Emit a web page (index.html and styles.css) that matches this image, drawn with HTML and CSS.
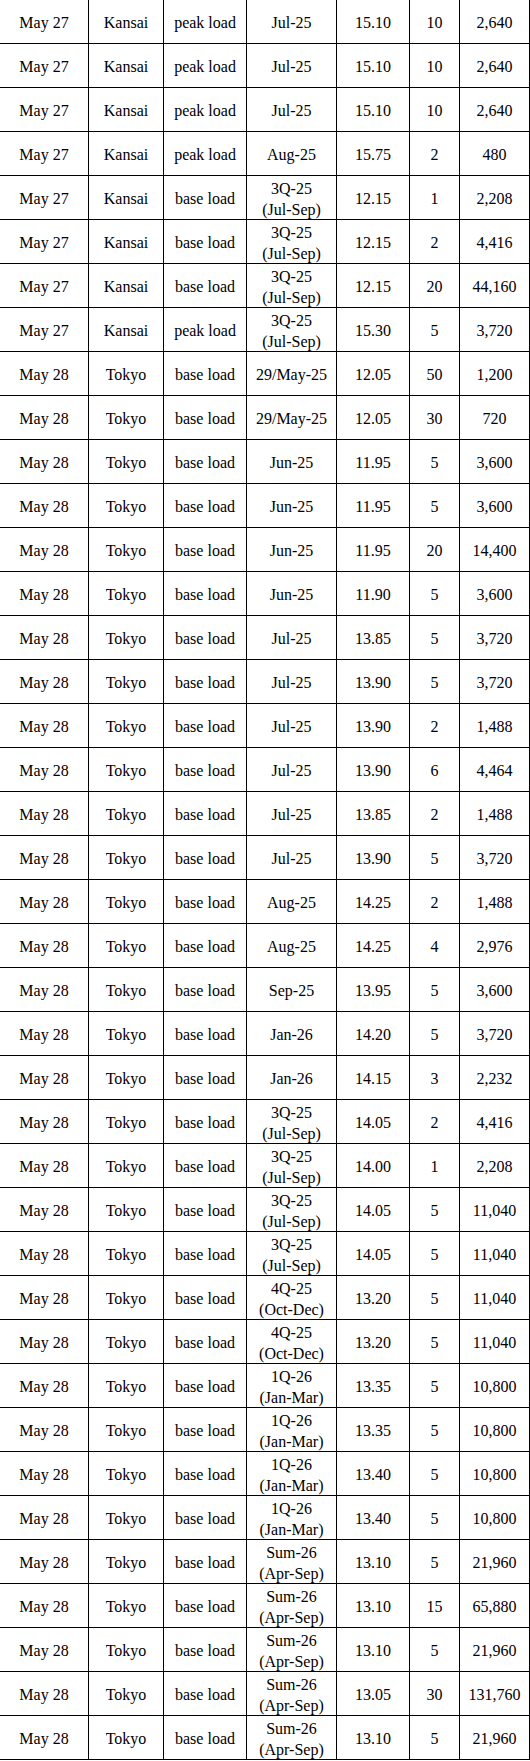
FILE: index.html
```html
<!DOCTYPE html>
<html lang="en">
<head>
<meta charset="utf-8">
<title>Trades</title>
<link rel="stylesheet" href="styles.css">
</head>
<body>
<div class="table">
<div class="row"><div class="c">May 27</div><div class="c">Kansai</div><div class="c">peak load</div><div class="c">Jul-25</div><div class="c">15.10</div><div class="c">10</div><div class="c">2,640</div></div>
<div class="row"><div class="c">May 27</div><div class="c">Kansai</div><div class="c">peak load</div><div class="c">Jul-25</div><div class="c">15.10</div><div class="c">10</div><div class="c">2,640</div></div>
<div class="row"><div class="c">May 27</div><div class="c">Kansai</div><div class="c">peak load</div><div class="c">Jul-25</div><div class="c">15.10</div><div class="c">10</div><div class="c">2,640</div></div>
<div class="row"><div class="c">May 27</div><div class="c">Kansai</div><div class="c">peak load</div><div class="c">Aug-25</div><div class="c">15.75</div><div class="c">2</div><div class="c">480</div></div>
<div class="row"><div class="c">May 27</div><div class="c">Kansai</div><div class="c">base load</div><div class="c">3Q-25<br>(Jul-Sep)</div><div class="c">12.15</div><div class="c">1</div><div class="c">2,208</div></div>
<div class="row"><div class="c">May 27</div><div class="c">Kansai</div><div class="c">base load</div><div class="c">3Q-25<br>(Jul-Sep)</div><div class="c">12.15</div><div class="c">2</div><div class="c">4,416</div></div>
<div class="row"><div class="c">May 27</div><div class="c">Kansai</div><div class="c">base load</div><div class="c">3Q-25<br>(Jul-Sep)</div><div class="c">12.15</div><div class="c">20</div><div class="c">44,160</div></div>
<div class="row"><div class="c">May 27</div><div class="c">Kansai</div><div class="c">peak load</div><div class="c">3Q-25<br>(Jul-Sep)</div><div class="c">15.30</div><div class="c">5</div><div class="c">3,720</div></div>
<div class="row"><div class="c">May 28</div><div class="c">Tokyo</div><div class="c">base load</div><div class="c">29/May-25</div><div class="c">12.05</div><div class="c">50</div><div class="c">1,200</div></div>
<div class="row"><div class="c">May 28</div><div class="c">Tokyo</div><div class="c">base load</div><div class="c">29/May-25</div><div class="c">12.05</div><div class="c">30</div><div class="c">720</div></div>
<div class="row"><div class="c">May 28</div><div class="c">Tokyo</div><div class="c">base load</div><div class="c">Jun-25</div><div class="c">11.95</div><div class="c">5</div><div class="c">3,600</div></div>
<div class="row"><div class="c">May 28</div><div class="c">Tokyo</div><div class="c">base load</div><div class="c">Jun-25</div><div class="c">11.95</div><div class="c">5</div><div class="c">3,600</div></div>
<div class="row"><div class="c">May 28</div><div class="c">Tokyo</div><div class="c">base load</div><div class="c">Jun-25</div><div class="c">11.95</div><div class="c">20</div><div class="c">14,400</div></div>
<div class="row"><div class="c">May 28</div><div class="c">Tokyo</div><div class="c">base load</div><div class="c">Jun-25</div><div class="c">11.90</div><div class="c">5</div><div class="c">3,600</div></div>
<div class="row"><div class="c">May 28</div><div class="c">Tokyo</div><div class="c">base load</div><div class="c">Jul-25</div><div class="c">13.85</div><div class="c">5</div><div class="c">3,720</div></div>
<div class="row"><div class="c">May 28</div><div class="c">Tokyo</div><div class="c">base load</div><div class="c">Jul-25</div><div class="c">13.90</div><div class="c">5</div><div class="c">3,720</div></div>
<div class="row"><div class="c">May 28</div><div class="c">Tokyo</div><div class="c">base load</div><div class="c">Jul-25</div><div class="c">13.90</div><div class="c">2</div><div class="c">1,488</div></div>
<div class="row"><div class="c">May 28</div><div class="c">Tokyo</div><div class="c">base load</div><div class="c">Jul-25</div><div class="c">13.90</div><div class="c">6</div><div class="c">4,464</div></div>
<div class="row"><div class="c">May 28</div><div class="c">Tokyo</div><div class="c">base load</div><div class="c">Jul-25</div><div class="c">13.85</div><div class="c">2</div><div class="c">1,488</div></div>
<div class="row"><div class="c">May 28</div><div class="c">Tokyo</div><div class="c">base load</div><div class="c">Jul-25</div><div class="c">13.90</div><div class="c">5</div><div class="c">3,720</div></div>
<div class="row"><div class="c">May 28</div><div class="c">Tokyo</div><div class="c">base load</div><div class="c">Aug-25</div><div class="c">14.25</div><div class="c">2</div><div class="c">1,488</div></div>
<div class="row"><div class="c">May 28</div><div class="c">Tokyo</div><div class="c">base load</div><div class="c">Aug-25</div><div class="c">14.25</div><div class="c">4</div><div class="c">2,976</div></div>
<div class="row"><div class="c">May 28</div><div class="c">Tokyo</div><div class="c">base load</div><div class="c">Sep-25</div><div class="c">13.95</div><div class="c">5</div><div class="c">3,600</div></div>
<div class="row"><div class="c">May 28</div><div class="c">Tokyo</div><div class="c">base load</div><div class="c">Jan-26</div><div class="c">14.20</div><div class="c">5</div><div class="c">3,720</div></div>
<div class="row"><div class="c">May 28</div><div class="c">Tokyo</div><div class="c">base load</div><div class="c">Jan-26</div><div class="c">14.15</div><div class="c">3</div><div class="c">2,232</div></div>
<div class="row"><div class="c">May 28</div><div class="c">Tokyo</div><div class="c">base load</div><div class="c">3Q-25<br>(Jul-Sep)</div><div class="c">14.05</div><div class="c">2</div><div class="c">4,416</div></div>
<div class="row"><div class="c">May 28</div><div class="c">Tokyo</div><div class="c">base load</div><div class="c">3Q-25<br>(Jul-Sep)</div><div class="c">14.00</div><div class="c">1</div><div class="c">2,208</div></div>
<div class="row"><div class="c">May 28</div><div class="c">Tokyo</div><div class="c">base load</div><div class="c">3Q-25<br>(Jul-Sep)</div><div class="c">14.05</div><div class="c">5</div><div class="c">11,040</div></div>
<div class="row"><div class="c">May 28</div><div class="c">Tokyo</div><div class="c">base load</div><div class="c">3Q-25<br>(Jul-Sep)</div><div class="c">14.05</div><div class="c">5</div><div class="c">11,040</div></div>
<div class="row"><div class="c">May 28</div><div class="c">Tokyo</div><div class="c">base load</div><div class="c">4Q-25<br>(Oct-Dec)</div><div class="c">13.20</div><div class="c">5</div><div class="c">11,040</div></div>
<div class="row"><div class="c">May 28</div><div class="c">Tokyo</div><div class="c">base load</div><div class="c">4Q-25<br>(Oct-Dec)</div><div class="c">13.20</div><div class="c">5</div><div class="c">11,040</div></div>
<div class="row"><div class="c">May 28</div><div class="c">Tokyo</div><div class="c">base load</div><div class="c">1Q-26<br>(Jan-Mar)</div><div class="c">13.35</div><div class="c">5</div><div class="c">10,800</div></div>
<div class="row"><div class="c">May 28</div><div class="c">Tokyo</div><div class="c">base load</div><div class="c">1Q-26<br>(Jan-Mar)</div><div class="c">13.35</div><div class="c">5</div><div class="c">10,800</div></div>
<div class="row"><div class="c">May 28</div><div class="c">Tokyo</div><div class="c">base load</div><div class="c">1Q-26<br>(Jan-Mar)</div><div class="c">13.40</div><div class="c">5</div><div class="c">10,800</div></div>
<div class="row"><div class="c">May 28</div><div class="c">Tokyo</div><div class="c">base load</div><div class="c">1Q-26<br>(Jan-Mar)</div><div class="c">13.40</div><div class="c">5</div><div class="c">10,800</div></div>
<div class="row"><div class="c">May 28</div><div class="c">Tokyo</div><div class="c">base load</div><div class="c">Sum-26<br>(Apr-Sep)</div><div class="c">13.10</div><div class="c">5</div><div class="c">21,960</div></div>
<div class="row"><div class="c">May 28</div><div class="c">Tokyo</div><div class="c">base load</div><div class="c">Sum-26<br>(Apr-Sep)</div><div class="c">13.10</div><div class="c">15</div><div class="c">65,880</div></div>
<div class="row"><div class="c">May 28</div><div class="c">Tokyo</div><div class="c">base load</div><div class="c">Sum-26<br>(Apr-Sep)</div><div class="c">13.10</div><div class="c">5</div><div class="c">21,960</div></div>
<div class="row"><div class="c">May 28</div><div class="c">Tokyo</div><div class="c">base load</div><div class="c">Sum-26<br>(Apr-Sep)</div><div class="c">13.05</div><div class="c">30</div><div class="c">131,760</div></div>
<div class="row"><div class="c">May 28</div><div class="c">Tokyo</div><div class="c">base load</div><div class="c">Sum-26<br>(Apr-Sep)</div><div class="c">13.10</div><div class="c">5</div><div class="c">21,960</div></div>
</div>
</body>
</html>
```
FILE: styles.css
```css
html, body {
  margin: 0;
  padding: 0;
  background: #fff;
}
body {
  font-family: "Liberation Serif", "Times New Roman", serif;
  font-size: 16px;
  color: #000;
}
.table {
  width: 530px;
}
.row {
  display: grid;
  grid-template-columns: 89px 75px 83px 90px 73px 50px 70px;
}
.c {
  box-sizing: border-box;
  height: 44px;
  border-right: 1px solid #000;
  border-bottom: 1px solid #000;
  display: flex;
  align-items: center;
  justify-content: center;
  text-align: center;
  line-height: 21px;
  padding-top: 2px;
  white-space: nowrap;
}
```
